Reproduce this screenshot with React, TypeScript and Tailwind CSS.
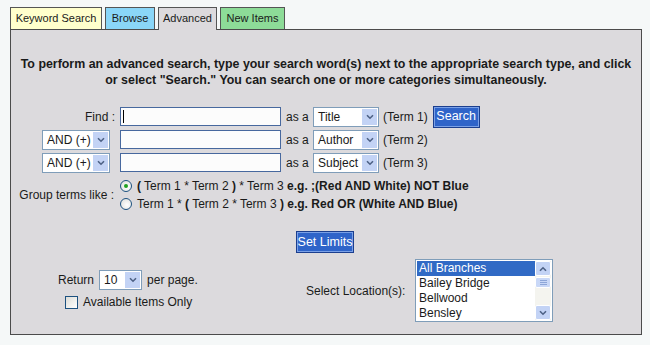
import React from 'react';

const Chevron = () => (
  <svg width="8" height="6" viewBox="0 0 8 6">
    <path d="M1 1.2 L4 4.2 L7 1.2" fill="none" stroke="#4d6185" strokeWidth="1.6" />
  </svg>
);

function XPSelect({ className, label }: { className: string; label: string }) {
  return (
    <div className={`${className} h-[20px] border border-[#7f9db9] bg-white flex items-center`}>
      <span className="flex-1 pl-[4px] leading-none whitespace-nowrap">{label}</span>
      <span className="w-[15px] h-[16px] mr-[1px] bg-[#c3d3f5] flex items-center justify-center">
        <Chevron />
      </span>
    </div>
  );
}

function XPButton({ className, children }: { className: string; children: React.ReactNode }) {
  return (
    <div
      className={`${className} h-[22px] border border-[#1b3e8e] bg-[#2f64c9] text-white text-[12.5px] shadow-[inset_0_0_0_1px_#7aa0e6] flex items-center justify-center leading-none`}
    >
      {children}
    </div>
  );
}

const TextBox = ({ caret }: { caret?: boolean }) => (
  <div className="w-[161px] h-[19px] border border-[#47689e] bg-[#fcfcfc] flex items-center">
    {caret && <span className="w-px h-[13px] bg-black ml-[2px]" />}
  </div>
);

const Radio = ({ checked }: { checked?: boolean }) => (
  <span className="w-[12px] h-[12px] rounded-full border border-[#1c5180] bg-[radial-gradient(circle_at_60%_60%,#ffffff,#dcdcd7)] flex items-center justify-center shrink-0">
    {checked && <span className="w-[4px] h-[4px] rounded-full bg-[#21a121]" />}
  </span>
);

const branches = ['All Branches', 'Bailey Bridge', 'Bellwood', 'Bensley'];

export default function App() {
  return (
    <div className="w-[650px] h-[345px] bg-[#f5f8f8] overflow-hidden font-['Liberation_Sans',Arial,sans-serif] text-[12px] text-[#1a1a1a]">
      {/* tabs */}
      <div className="flex items-end gap-[3px] pl-[10px] pt-[7px] text-[11px]">
        <div className="w-[92px] h-[22px] border border-b-0 border-[#555] bg-[#ffffcc] flex items-center justify-center">Keyword Search</div>
        <div className="w-[50px] h-[22px] border border-b-0 border-[#555] bg-[#8ad6f8] flex items-center justify-center">Browse</div>
        <div className="relative z-10 w-[59px] h-[23px] -mb-px border border-b-0 border-[#555] bg-[#dcdadd] flex items-center justify-center pb-px">Advanced</div>
        <div className="w-[65px] h-[22px] border border-b-0 border-[#555] bg-[#8ddc98] flex items-center justify-center">New Items</div>
      </div>

      {/* panel */}
      <div className="ml-[10px] w-[632px] h-[306px] border border-[#4b4b4b] bg-[#dcdadd] flex flex-col">
        <p className="pt-[26px] text-center font-bold text-[12.4px] leading-[16px] whitespace-nowrap">
          To perform an advanced search, type your search word(s) next to the appropriate search type, and click
          <br />
          or select "Search." You can search one or more categories simultaneously.
        </p>

        {/* term rows */}
        <div className="mt-[17px] flex flex-col">
          {[
            { first: 'find', field: 'Title', term: '(Term 1)' },
            { first: 'and', field: 'Author', term: '(Term 2)' },
            { first: 'and', field: 'Subject', term: '(Term 3)' },
          ].map((row, i) => (
            <div key={i} className="h-[23px] flex items-center">
              <div className="w-[105px] flex justify-end">
                {row.first === 'find' ? (
                  <span className="pr-[1px]">Find :</span>
                ) : (
                  <XPSelect className="w-[68px] mr-[6px]" label="AND (+)" />
                )}
              </div>
              <div className="ml-[4px]">
                <TextBox caret={i === 0} />
              </div>
              <span className="ml-[5px] w-[27px]">as a</span>
              <XPSelect className="w-[66px]" label={row.field} />
              <span className="ml-[4px]">{row.term}</span>
              {i === 0 && <XPButton className="w-[47px] ml-[5px]">Search</XPButton>}
            </div>
          ))}
        </div>

        {/* grouping */}
        <div className="mt-[3px] flex items-center">
          <div className="w-[105px] text-right pr-[2px]">Group terms like :</div>
          <div className="ml-[4px] flex flex-col">
            <label className="h-[18px] flex items-center gap-[5px]">
              <Radio checked />
              <span className="whitespace-pre">
                <b>(</b> Term 1 * Term 2 <b>)</b> * Term 3 <b>e.g. ;(Red AND White) NOT Blue</b>
              </span>
            </label>
            <label className="h-[18px] flex items-center gap-[5px]">
              <Radio />
              <span className="whitespace-pre">
                Term 1 * <b>(</b> Term 2 * Term 3 <b>)</b> <b>e.g. Red OR (White AND Blue)</b>
              </span>
            </label>
          </div>
        </div>

        <div className="mt-[18px] flex justify-center pr-[2px]">
          <XPButton className="w-[58px]">Set Limits</XPButton>
        </div>

        {/* limits */}
        <div className="mt-[6px] flex items-center">
          <div className="w-[232px] pl-[47px] flex flex-col">
            <div className="flex items-center">
              <span>Return</span>
              <XPSelect className="w-[43px] ml-[5px]" label="10" />
              <span className="ml-[5px]">per page.</span>
            </div>
            <div className="mt-[3px] ml-[7px] h-[18px] flex items-center">
              <span className="w-[13px] h-[13px] border border-[#1c5180] bg-[linear-gradient(135deg,#dcdcd7,#ffffff)]" />
              <span className="ml-[5px]">Available Items Only</span>
            </div>
          </div>
          <div className="ml-[63px] flex items-center">
            <span className="w-[109px] whitespace-nowrap">Select Location(s):</span>
            <div className="w-[138px] h-[63px] border border-[#7f9db9] bg-white p-px flex">
              <div className="flex-1 flex flex-col">
                {branches.map((b, i) => (
                  <div
                    key={b}
                    className={`h-[15px] leading-[15px] pl-[2px] whitespace-nowrap ${i === 0 ? 'bg-[#316ac5] text-white' : ''}`}
                  >
                    {b}
                  </div>
                ))}
              </div>
              <div className="w-[16px] bg-[#f4f4ef] flex flex-col">
                <div className="h-[15px] border border-white bg-[#c3d3f5] rounded-[2px] flex items-center justify-center">
                  <svg width="8" height="6" viewBox="0 0 8 6">
                    <path d="M1 4.8 L4 1.8 L7 4.8" fill="none" stroke="#4d6185" strokeWidth="1.6" />
                  </svg>
                </div>
                <div className="h-[11px] mt-px border border-white bg-[#c9d8f7] rounded-[2px] flex flex-col items-center justify-center gap-px">
                  <span className="w-[7px] h-px bg-[#8da6d8]" />
                  <span className="w-[7px] h-px bg-[#8da6d8]" />
                  <span className="w-[7px] h-px bg-[#8da6d8]" />
                </div>
                <div className="flex-1" />
                <div className="h-[15px] border border-white bg-[#c3d3f5] rounded-[2px] flex items-center justify-center">
                  <Chevron />
                </div>
              </div>
            </div>
          </div>
        </div>
      </div>
    </div>
  );
}
